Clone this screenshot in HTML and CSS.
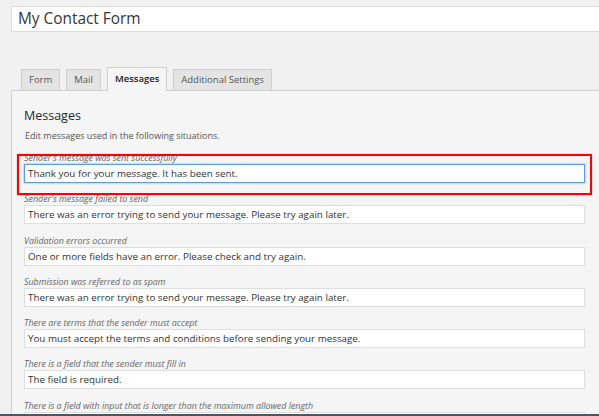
FILE: index.html
```html
<!DOCTYPE html>
<html>
<head>
<meta charset="utf-8">
<link rel="stylesheet" href="styles.css">
</head>
<body>
<div class="page">
  <div class="title-input">My Contact Form</div>
  <div class="tabs">
    <div class="tab">Form</div>
    <div class="tab">Mail</div>
    <div class="tab active">Messages</div>
    <div class="tab">Additional Settings</div>
  </div>
  <div class="panel">
    <h2 class="heading">Messages</h2>
    <p class="desc">Edit messages used in the following situations.</p>
    <div class="field">
      <label class="label">Sender's message was sent successfully</label>
      <div class="input focus">Thank you for your message. It has been sent.</div>
    </div>
    <div class="field">
      <label class="label">Sender's message failed to send</label>
      <div class="input">There was an error trying to send your message. Please try again later.</div>
    </div>
    <div class="field">
      <label class="label">Validation errors occurred</label>
      <div class="input">One or more fields have an error. Please check and try again.</div>
    </div>
    <div class="field">
      <label class="label">Submission was referred to as spam</label>
      <div class="input">There was an error trying to send your message. Please try again later.</div>
    </div>
    <div class="field">
      <label class="label">There are terms that the sender must accept</label>
      <div class="input">You must accept the terms and conditions before sending your message.</div>
    </div>
    <div class="field">
      <label class="label">There is a field that the sender must fill in</label>
      <div class="input">The field is required.</div>
    </div>
    <div class="field">
      <label class="label">There is a field with input that is longer than the maximum allowed length</label>
      <div class="input"></div>
    </div>
  </div>
  <div class="highlight"></div>
</div>
<div class="bottom-strip"></div>
</body>
</html>
```

FILE: styles.css
```css
html, body {
  margin: 0;
  padding: 0;
  height: 100%;
  overflow: hidden;
  background: #f1f1f1;
  font-family: "Open Sans", "Liberation Sans", sans-serif;
  color: #333;
}
.page {
  position: relative;
  padding: 6px 0 0 11px;
  margin-right: -20px;
}
.title-input {
  height: 24px;
  background: #fff;
  border: 1px solid #dcdcdc;
  font-size: 15.4px;
  line-height: 24px;
  padding-left: 6px;
  color: #32373c;
}
.tabs {
  display: flex;
  align-items: flex-end;
  gap: 6px;
  margin-top: 36px;
  padding-left: 10px;
  height: 22px;
  position: relative;
  z-index: 1;
}
.tab {
  height: 20px;
  line-height: 20px;
  padding: 0 7px;
  font-size: 9.5px;
  color: #555;
  background: #e4e4e4;
  border: 1px solid #cfcfcf;
  border-bottom: none;
}
.tab.active {
  line-height: 22px;
  background: #f5f5f5;
  color: #222;
  font-weight: 600;
  margin-bottom: -1px;
  height: 23px;
}
.panel {
  background: #f5f5f5;
  border: 1px solid #d0d0d0;
  border-right: none;
  padding: 17px 0 0 12px;
  height: 400px;
}
.heading {
  margin: 0;
  font-size: 12.5px;
  line-height: 16px;
  font-weight: 400;
  color: #23282d;
}
.desc {
  margin: 5px 0 10px 1px;
  font-size: 9px;
  line-height: 13px;
  color: #555;
}
.field {
  width: 561px;
  margin-bottom: 10.3px;
}
.label {
  display: block;
  font-size: 8.9px;
  line-height: 12px;
  font-style: italic;
  color: #666;
}
.input {
  box-sizing: border-box;
  height: 19px;
  background: #fff;
  border: 1px solid #dedede;
  padding-left: 3px;
  font-size: 9.8px;
  line-height: 17px;
  color: #333;
  white-space: nowrap;
}
.input.focus {
  border-color: #5b9dd9;
  box-shadow: 0 0 2px rgba(30, 140, 190, 0.6);
}
.highlight {
  position: absolute;
  left: 17px;
  top: 154px;
  width: 571px;
  height: 37px;
  border: 2px solid #f00;
  box-shadow: 0 0 1px rgba(255, 0, 0, 0.6);
  pointer-events: none;
}
.bottom-strip {
  position: fixed;
  left: 0;
  right: 0;
  bottom: 0;
  height: 2px;
  background: #4a5661;
}
```
